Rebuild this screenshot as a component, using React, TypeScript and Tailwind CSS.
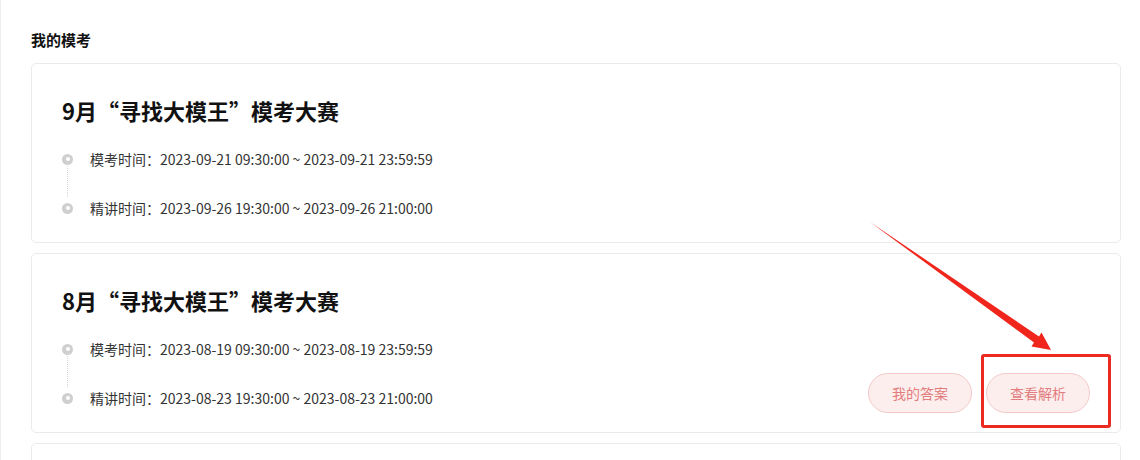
import React from 'react';

type Exam = {
  title: string;
  examTime: string;
  lectureTime: string;
  done?: boolean;
};

const exams: Exam[] = [
  {
    title: '9月“寻找大模王”模考大赛',
    examTime: '2023-09-21 09:30:00 ~ 2023-09-21 23:59:59',
    lectureTime: '2023-09-26 19:30:00 ~ 2023-09-26 21:00:00',
  },
  {
    title: '8月“寻找大模王”模考大赛',
    examTime: '2023-08-19 09:30:00 ~ 2023-08-19 23:59:59',
    lectureTime: '2023-08-23 19:30:00 ~ 2023-08-23 21:00:00',
    done: true,
  },
];

function Dot() {
  return (
    <span className="w-[11px] h-[11px] rounded-full bg-[#cfcfcf] flex items-center justify-center shrink-0">
      <span className="w-[4px] h-[4px] rounded-full bg-white" />
    </span>
  );
}

function ExamCard({ exam }: { exam: Exam }) {
  return (
    <div className="h-[180px] shrink-0 rounded-[5px] border border-[#ebebeb] bg-white flex items-end justify-between pl-[30px] pr-[30px]">
      <div className="self-start pt-[31px]">
        <h2 className="text-[22px] leading-[30px] font-bold text-[#111]">{exam.title}</h2>
        <div className="relative mt-[24px] flex flex-col gap-[29px]">
          <span className="absolute left-[5px] top-[14px] h-[34px] border-l border-dotted border-[#d6d6d6]" />
          <div className="flex items-center gap-[17px] h-[20px] text-[14px] text-[#333]">
            <Dot />
            <span>模考时间：{exam.examTime}</span>
          </div>
          <div className="flex items-center gap-[17px] h-[20px] text-[14px] text-[#333]">
            <Dot />
            <span>精讲时间：{exam.lectureTime}</span>
          </div>
        </div>
      </div>
      {exam.done && (
        <div className="flex gap-[14px] mb-[19px]">
          <button
            type="button"
            className="w-[104px] h-[40px] rounded-full bg-[#fdeeee] border border-[#f3c9c9] text-[14px] text-[#e27c7c]"
          >
            我的答案
          </button>
          <button
            type="button"
            className="w-[104px] h-[40px] rounded-full bg-[#fdeeee] border border-[#f3c9c9] text-[14px] text-[#e27c7c]"
          >
            查看解析
          </button>
        </div>
      )}
    </div>
  );
}

export default function App() {
  return (
    <div
      className="relative w-[1140px] h-[460px] overflow-hidden bg-white border-l border-[#eeeeee] pl-[30px] pr-[19px] pt-[29px]"
      style={{ fontFamily: '"Noto Sans CJK SC", "Noto Sans", sans-serif' }}
    >
      <h1 className="text-[15px] leading-[22px] font-bold text-[#111]">我的模考</h1>
      <div className="mt-[12px] flex flex-col gap-[10px]">
        {exams.map((e) => (
          <ExamCard key={e.title} exam={e} />
        ))}
        {/* next card, only its top edge is visible */}
        <div className="h-[180px] shrink-0 rounded-[5px] border border-[#ebebeb] bg-white" />
      </div>

      {/* annotation */}
      <div className="absolute left-[980px] top-[354px] w-[130px] h-[74px] border-[3px] border-[#ec2a22] rounded-[3px] pointer-events-none" />
      <svg className="absolute left-0 top-0 pointer-events-none" width="1140" height="460">
        <polygon
          points="869,222 1038,336.5 1040.5,332.5 1050,350 1030.5,346.5 1033,342.5"
          fill="#f0261d"
        />
      </svg>
    </div>
  );
}
